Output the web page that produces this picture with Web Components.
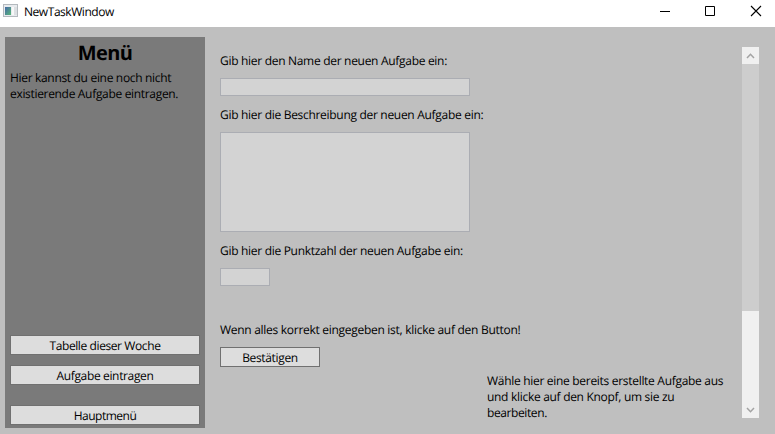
<!DOCTYPE html>
<html lang="de">
<head>
<meta charset="utf-8">
<title>NewTaskWindow</title>
<style>
html,body{margin:0;height:100%;overflow:hidden}
body{font:12px/16px "Open Sans","Noto Sans",sans-serif;color:#000;text-rendering:geometricPrecision;letter-spacing:-.3px}
</style>
</head>
<body>
<task-window></task-window>
<script>
const define=(name,html)=>{
  const t=document.createElement('template');
  t.innerHTML=html;
  customElements.define(name,class extends HTMLElement{
    constructor(){super();this.attachShadow({mode:'open'}).append(t.content.cloneNode(true));}
  });
};

define('title-bar',`<style>
:host{display:flex;height:27px;background:#fff;flex:none;align-items:flex-start}
.icon{margin:4px 0 0 3px}
.name{margin:4px 0 0 6px;flex:1;white-space:nowrap;letter-spacing:-.45px}
.btns{display:block}
</style>
<svg class="icon" width="15" height="14" viewBox="0 0 15 14" shape-rendering="crispEdges">
<defs><linearGradient id="g" x1="0" y1="0" x2="1" y2="1"><stop offset="0" stop-color="#4668a8"/><stop offset="1" stop-color="#58b878"/></linearGradient></defs>
<rect width="15" height="13" fill="#b4b9be"/><rect x="1" y="1" width="13" height="11" fill="#e8ebee"/>
<rect x="2" y="3" width="6" height="8" fill="url(#g)"/><rect x="9" y="3" width="2" height="8" fill="#f8f8f8"/><rect x="11" y="3" width="3" height="8" fill="#dce0e3"/></svg>
<span class="name"><slot></slot></span>
<svg class="btns" width="135" height="27" viewBox="0 0 135 27" fill="none" stroke="#000">
<path d="M20 11.500h10M65.500 6.500h9v9h-9z"/><path d="M111 6l10 10M121 6l-10 10" stroke-width="1.100"/></svg>`);

define('push-button',`<style>
:host{display:block;box-sizing:border-box;height:20px;border:1px solid #707070;background:#ddd;text-align:center;line-height:20px;white-space:nowrap;letter-spacing:var(--ls,-.35px)}
</style><slot></slot>`);

define('side-menu',`<style>
:host{display:flex;flex-direction:column;box-sizing:border-box;width:200px;height:391px;padding:0 5px 3px;background:#7a7a7a;flex:none}
h1{margin:2px 0 0;font-size:20px;line-height:27px;text-align:center;font-weight:700;letter-spacing:-.6px}
p{margin:4px 0 0;white-space:nowrap;letter-spacing:-.32px}
.nav{margin-top:auto;display:flex;flex-direction:column;gap:10px}
.last{margin-top:10px}
</style>
<h1>Menü</h1>
<p>Hier kannst du eine noch nicht<br>existierende Aufgabe eintragen.</p>
<div class="nav"><push-button style="--ls:-.4px">Tabelle dieser Woche</push-button><push-button>Aufgabe eintragen</push-button><push-button class="last" style="--ls:-.5px">Hauptmenü</push-button></div>`);

define('text-field',`<style>
:host{display:block;width:250px}
label{display:block;white-space:nowrap}
.box{box-sizing:border-box;margin-top:9px;width:var(--w,250px);height:var(--h,18px);border:1px solid #abadb3;background:#d3d3d3}
</style><label><slot></slot></label><div class="box"></div>`);

define('scroll-bar',`<style>
:host{display:flex;flex-direction:column;width:17px;height:371px;background:#cdcdcd;justify-content:space-between}
div{background:#f0f0f0;display:flex}
.up{height:17px}.down{height:107px;align-items:flex-end}
svg{display:block}
</style>
<div class="up"><svg width="17" height="17" fill="none" stroke="#a3a3a3" stroke-width="1.500"><path d="M5 11l3.500-3.700L12 11"/></svg></div>
<div class="down"><svg width="17" height="17" fill="none" stroke="#a3a3a3" stroke-width="1.500"><path d="M5 7l3.500 3.700L12 7"/></svg></div>`);

define('task-form',`<style>
:host{display:flex;flex-direction:column;width:267px;height:100%}
text-field+text-field{margin-top:11px}
.confirm{margin:36px 0 9px;white-space:nowrap;letter-spacing:-.285px}
push-button{width:100px}
</style>
<text-field>Gib hier den Name der neuen Aufgabe ein:</text-field>
<text-field style="--h:100px">Gib hier die Beschreibung der neuen Aufgabe ein:</text-field>
<text-field style="--w:50px">Gib hier die Punktzahl der neuen Aufgabe ein:</text-field>
<p class="confirm">Wenn alles korrekt eingegeben ist, klicke auf den Button!</p>
<push-button>Bestätigen</push-button>`);

define('task-hint',`<style>
:host{display:block;white-space:nowrap}
.c{letter-spacing:-.4px}
</style>Wähle hier eine bereits erstellte Aufgabe aus<br>und klicke auf den Knopf, um sie zu<br><span class="c">bearbeiten.</span>`);

define('task-window',`<style>
:host{display:flex;flex-direction:column;width:775px;height:434px;background:#bfbfbf}
main{display:flex;padding:10px 16px 0 5px;align-items:flex-start}
task-form{margin:16px 0 0 15px}
task-hint{margin-top:336px;flex:1}
scroll-bar{margin-top:10px}
</style>
<title-bar>NewTaskWindow</title-bar>
<main><side-menu></side-menu><task-form></task-form><task-hint></task-hint><scroll-bar></scroll-bar></main>`);
</script>
</body>
</html>
